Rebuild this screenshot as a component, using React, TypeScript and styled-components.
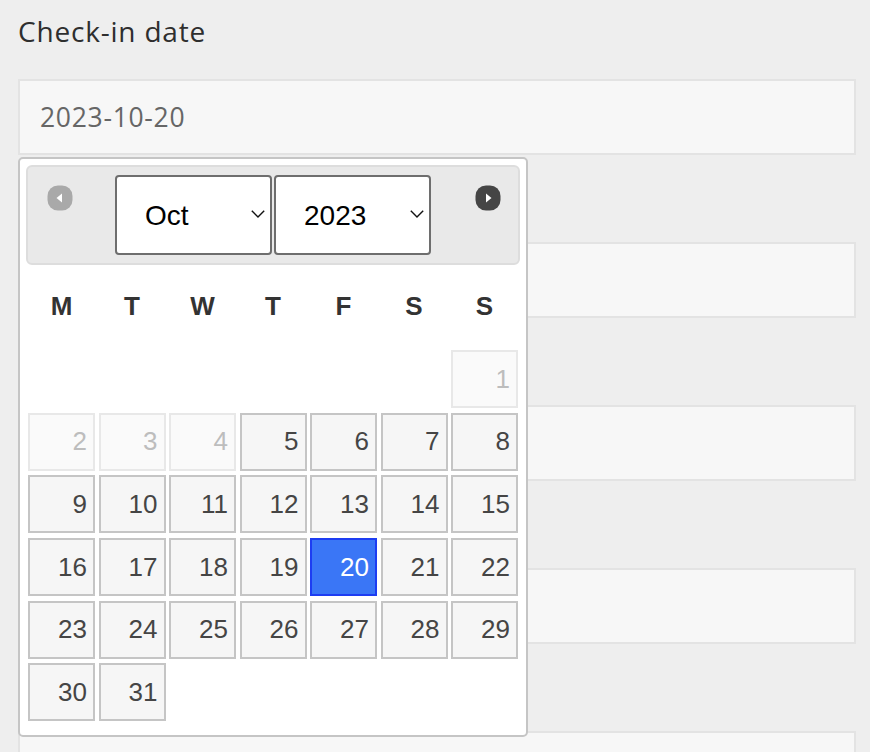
import React from "react";
import styled, { createGlobalStyle, css } from "styled-components";

const Global = createGlobalStyle`
  html, body { margin: 0; padding: 0; background: #eeeeee; }
  body { font-family: "Open Sans", Arial, sans-serif; }
  * { box-sizing: border-box; }
`;

const Page = styled.div`
  padding: 8px 14px 0 18px;
  height: 752px;
  overflow: hidden;
`;

const Field = styled.div`
  margin-bottom: 16px;
`;

const Label = styled.label`
  display: block;
  height: 46px;
  line-height: 46px;
  margin-bottom: 25px;
  font-size: 28px;
  letter-spacing: 0.8px;
  color: #2e2e2e;
`;

const InputWrap = styled.div`
  position: relative;
`;

const TextInput = styled.input`
  display: block;
  width: 100%;
  height: 76px;
  border: 2px solid #e3e3e3;
  background: #f7f7f7;
  padding: 0 20px;
  font-family: "Open Sans", Arial, sans-serif;
  font-size: 26.5px;
  letter-spacing: 0.7px;
  color: #666666;
  outline: none;
`;

const Picker = styled.div`
  position: absolute;
  top: calc(100% + 2px);
  left: 0;
  width: 510px;
  background: #ffffff;
  border: 2px solid #c5c5c5;
  border-radius: 5px;
  padding: 6px;
  font-family: "Liberation Sans", Arial, sans-serif;
  z-index: 5;
`;

const Header = styled.div`
  position: relative;
  height: 100px;
  border: 2px solid #dddddd;
  background: #e9e9e9;
  border-radius: 6px;
  display: flex;
  justify-content: center;
  align-items: center;
  gap: 2px;
`;

const NavButton = styled.span<{ $side: "prev" | "next" }>`
  position: absolute;
  top: 18px;
  width: 26px;
  height: 26px;
  display: flex;
  ${(p) => (p.$side === "prev" ? css`left: 19px;` : css`right: 17px;`)}
`;

const SelectBox = styled.div`
  position: relative;
  width: 157px;
  height: 80px;
`;

const Select = styled.select`
  appearance: none;
  -webkit-appearance: none;
  width: 100%;
  height: 100%;
  border: 2px solid #6e6e6e;
  border-radius: 4px;
  background: #ffffff;
  font-family: "Liberation Sans", Arial, sans-serif;
  font-size: 28px;
  color: #000000;
  padding: 0 0 0 28px;
  outline: none;
`;

const Chevron = styled.svg`
  position: absolute;
  right: 7px;
  top: calc(50% - 5px);
  pointer-events: none;
`;

const WeekRow = styled.div`
  margin: 6px 2px 0;
  height: 70px;
  display: grid;
  grid-template-columns: repeat(7, 67px);
  column-gap: 3.5px;
  align-items: center;
`;

const WeekDay = styled.span`
  text-align: center;
  font-weight: bold;
  font-size: 26px;
  color: #333333;
`;

const Days = styled.div`
  margin: 9px 2px 7.5px;
  display: grid;
  grid-template-columns: repeat(7, 67px);
  grid-auto-rows: 58px;
  column-gap: 3.5px;
  row-gap: 4.7px;
`;

type DayState = "default" | "disabled" | "active";

const Day = styled.a<{ $state: DayState }>`
  display: flex;
  align-items: center;
  justify-content: flex-end;
  padding-right: 6px;
  border: 2px solid #c5c5c5;
  background: #f6f6f6;
  color: #454545;
  font-size: 26px;
  text-decoration: none;
  cursor: pointer;
  ${(p) =>
    p.$state === "disabled" &&
    css`
      border-color: #e8e8e8;
      background: #fafafa;
      color: #bdbdbd;
      cursor: default;
    `}
  ${(p) =>
    p.$state === "active" &&
    css`
      border-color: #1d3df2;
      background: #3a76f6;
      color: #ffffff;
    `}
`;

const Blank = styled.span``;

const NavIcon = ({ dir, color }: { dir: "left" | "right"; color: string }) => (
  <svg width="26" height="26" viewBox="0 0 26 26">
    <rect x="0.5" y="0.5" width="25" height="25" rx="10.5" fill={color} />
    {dir === "left" ? (
      <path d="M9.5 13 L15 8.5 L15 17.5 Z" fill="#ffffff" />
    ) : (
      <path d="M16.5 13 L11 8.5 L11 17.5 Z" fill="#ffffff" />
    )}
  </svg>
);

const Caret = () => (
  <Chevron width="14" height="8" viewBox="0 0 14 8">
    <path d="M0.8 0.8 L7 7 L13.2 0.8" fill="none" stroke="#111" strokeWidth="1.4" />
  </Chevron>
);

const months = ["Jan", "Feb", "Mar", "Apr", "May", "Jun", "Jul", "Aug", "Sep", "Oct", "Nov", "Dec"];
const weekdays = ["M", "T", "W", "T", "F", "S", "S"];

export default function App() {
  const cells: React.ReactNode[] = [];
  for (let i = 0; i < 6; i++) cells.push(<Blank key={"b" + i} />);
  for (let d = 1; d <= 31; d++) {
    const state: DayState = d < 5 ? "disabled" : d === 20 ? "active" : "default";
    cells.push(
      <Day key={d} $state={state}>
        {d}
      </Day>
    );
  }

  return (
    <>
      <Global />
      <Page>
        <Field>
          <Label>Check-in date</Label>
          <InputWrap>
            <TextInput defaultValue="2023-10-20" readOnly />
            <Picker>
              <Header>
                <NavButton $side="prev">
                  <NavIcon dir="left" color="#a9a9a9" />
                </NavButton>
                <SelectBox>
                  <Select defaultValue="Oct">
                    {months.map((m) => (
                      <option key={m}>{m}</option>
                    ))}
                  </Select>
                  <Caret />
                </SelectBox>
                <SelectBox>
                  <Select defaultValue="2023">
                    <option>2023</option>
                    <option>2024</option>
                  </Select>
                  <Caret />
                </SelectBox>
                <NavButton $side="next">
                  <NavIcon dir="right" color="#454545" />
                </NavButton>
              </Header>
              <WeekRow>
                {weekdays.map((w, i) => (
                  <WeekDay key={i}>{w}</WeekDay>
                ))}
              </WeekRow>
              <Days>{cells}</Days>
            </Picker>
          </InputWrap>
        </Field>
        {[0, 1, 2, 3].map((i) => (
          <Field key={i}>
            <Label />
            <TextInput readOnly />
          </Field>
        ))}
      </Page>
    </>
  );
}
